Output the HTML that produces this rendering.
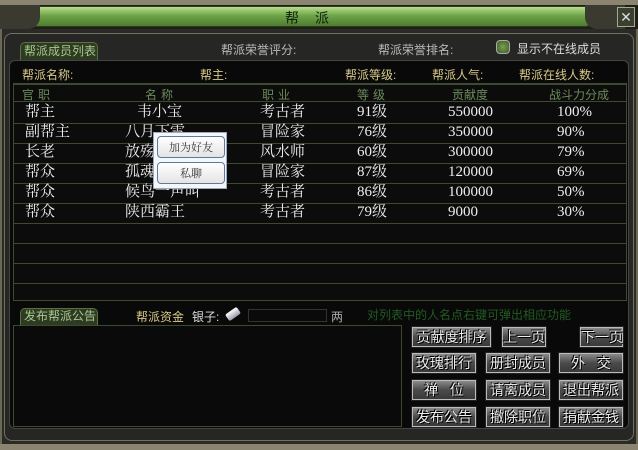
<!DOCTYPE html><html><head><meta charset="utf-8"><style>
*{margin:0;padding:0;box-sizing:border-box}
body{width:638px;height:450px;overflow:hidden;background:#2c2c28;font-family:"Liberation Sans","Noto Sans CJK SC",sans-serif;position:relative}
.a{position:absolute}
.t{font-size:12px;white-space:nowrap}
.y{color:#d8c98a}
.g{color:#6c8a5a}
.w{color:#eee;font-family:"Liberation Serif","Noto Serif CJK SC",serif;font-size:15px}
.btn{position:absolute;height:20px;background:linear-gradient(#8a8a8a,#4a4a4a 50%,#3a3a3a);border:1px solid #bbb;outline:1px solid #222;color:#eee;font-size:14px;text-align:center;line-height:18px;text-shadow:1px 1px 0 #000,-1px -1px 0 #000;white-space:pre}
.line{position:absolute;left:14px;width:612px;height:1px;background:#3c4a30}
</style></head><body>
<div class="a" style="left:0;top:0;width:638px;height:5px;background:#8a8470"></div>
<div class="a" style="left:0;top:5px;width:638px;height:24px;background:#1e2018"></div>
<div class="a" style="left:30px;top:6px;width:560px;height:21px;border-radius:4px;background:linear-gradient(#b8dc8c,#6ea448 45%,#4e7c30);border:1px solid #2a3a1a"></div>
<div class="a" style="left:0;top:5px;width:40px;height:24px;background:#3a3a30;border-radius:0 0 12px 0"></div>
<div class="a" style="left:585px;top:5px;width:40px;height:24px;background:#3a3a30;border-radius:0 0 0 12px"></div>
<div class="a" style="left:617px;top:7px;width:18px;height:20px;border:1px solid #a8a890;background:#3a4030;color:#ddd;font-size:14px;text-align:center;line-height:18px">✕</div>
<div class="a t" style="left:285px;top:8px;font-size:14px;color:#102010;letter-spacing:16px">帮派</div>
<div class="a" style="left:0;top:29px;width:638px;height:421px;border:2px solid #6c6856;border-top:none;background:#2a2a27"></div>
<div class="a" style="left:4px;top:33px;width:630px;height:408px;border:1px solid #707060;border-radius:8px;background:#262624"></div>
<div class="a t" style="left:20px;top:42px;width:78px;height:18px;border:1px solid #5a7040;border-bottom:none;border-radius:5px 5px 0 0;background:#2e3a22;color:#a8c890;line-height:16px;padding-left:3px">帮派成员列表</div>
<div class="a t" style="left:221px;top:41px;color:#bbb">帮派荣誉评分:</div>
<div class="a t" style="left:378px;top:41px;color:#bbb">帮派荣誉排名:</div>
<div class="a" style="left:496px;top:40px;width:14px;height:14px;border-radius:4px;background:radial-gradient(#7aa050,#3e5a28);border:1px solid #aaa"></div>
<div class="a t" style="left:517px;top:40px;color:#ddd">显示不在线成员</div>
<div class="a" style="left:9px;top:60px;width:620px;height:369px;background:#090909;border:1px solid #444;border-radius:6px"></div>
<div class="a t y" style="left:22px;top:66px">帮派名称:</div>
<div class="a t y" style="left:200px;top:66px">帮主:</div>
<div class="a t y" style="left:345px;top:66px">帮派等级:</div>
<div class="a t y" style="left:432px;top:66px">帮派人气:</div>
<div class="a t y" style="left:519px;top:66px">帮派在线人数:</div>
<div class="a" style="left:13px;top:83px;width:614px;height:218px;border:1px solid #3c4a30;background:#0c0c0c"></div>
<div class="line" style="top:84px"></div>
<div class="a t g" style="left:22px;top:86px;letter-spacing:4px">官职</div>
<div class="a t g" style="left:145px;top:86px;letter-spacing:4px">名称</div>
<div class="a t g" style="left:262px;top:86px;letter-spacing:4px">职业</div>
<div class="a t g" style="left:357px;top:86px;letter-spacing:4px">等级</div>
<div class="a t g" style="left:452px;top:86px">贡献度</div>
<div class="a t g" style="left:549px;top:86px">战斗力分成</div>
<div class="line" style="top:101px"></div>
<div class="line" style="top:123px"></div><div class="line" style="top:143px"></div><div class="line" style="top:163px"></div><div class="line" style="top:183px"></div><div class="line" style="top:203px"></div><div class="line" style="top:223px"></div><div class="line" style="top:243px"></div><div class="line" style="top:263px"></div><div class="line" style="top:283px"></div>
<div class="a w" style="left:25px;top:102px;line-height:20px">帮主<br>副帮主<br>长老<br>帮众<br>帮众<br>帮众</div>
<div class="a w" style="left:125px;top:102px;line-height:20px"><span style="margin-left:12px">韦小宝</span><br>八月下雪<br>放殇<br>孤魂<br>候鸟一声叫<br>陕西霸王</div>
<div class="a w" style="left:260px;top:102px;line-height:20px">考古者<br>冒险家<br>风水师<br>冒险家<br>考古者<br>考古者</div>
<div class="a w" style="left:357px;top:102px;line-height:20px">91级<br>76级<br>60级<br>87级<br>86级<br>79级</div>
<div class="a w" style="left:448px;top:102px;line-height:20px">550000<br>350000<br>300000<br>120000<br>100000<br>9000</div>
<div class="a w" style="left:557px;top:102px;line-height:20px">100%<br>90%<br>79%<br>69%<br>50%<br>30%</div>
<div class="a" style="left:153px;top:132px;width:74px;height:57px;background:#f4f6fa;border:1px solid #9ab"></div>
<div class="a" style="left:157px;top:136px;width:68px;height:22px;border:1px solid #5a7aa0;border-radius:4px;background:linear-gradient(#fff,#e4e4e4);font-family:'Noto Serif CJK SC',serif;font-size:11px;text-align:center;line-height:20px;color:#333">加为好友</div>
<div class="a" style="left:157px;top:162px;width:68px;height:22px;border:1px solid #5a7aa0;border-radius:4px;background:linear-gradient(#fff,#e4e4e4);font-family:'Noto Serif CJK SC',serif;font-size:11px;text-align:center;line-height:20px;color:#333">私聊</div>
<div class="a t" style="left:20px;top:308px;width:78px;height:17px;border:1px solid #5a7040;border-bottom:none;border-radius:5px 5px 0 0;background:#2e3a22;color:#a8c890;line-height:15px;padding-left:3px">发布帮派公告</div>
<div class="a t y" style="left:136px;top:308px">帮派资金</div>
<div class="a t" style="left:192px;top:308px;color:#ddd">银子:</div>
<div class="a" style="left:226px;top:310px;width:14px;height:8px;background:linear-gradient(#fff,#99a);transform:rotate(-35deg);border-radius:2px"></div>
<div class="a" style="left:248px;top:309px;width:79px;height:13px;background:#0a0a0a;border:1px solid #333"></div>
<div class="a t" style="left:331px;top:308px;color:#aaa">两</div>
<div class="a t" style="left:367px;top:306px;color:#225a22">对列表中的人名点右键可弹出相应功能</div>
<div class="a" style="left:13px;top:325px;width:389px;height:102px;border:1px solid #3c4a30;background:#0a0a0a"></div>
<div class="btn" style="left:412px;top:327px;width:79px">贡献度排序</div>
<div class="btn" style="left:502px;top:327px;width:44px">上一页</div>
<div class="btn" style="left:580px;top:327px;width:43px">下一页</div>
<div class="btn" style="left:412px;top:353px;width:64px">玫瑰排行</div>
<div class="btn" style="left:486px;top:353px;width:64px">册封成员</div>
<div class="btn" style="left:559px;top:353px;width:64px">外   交</div>
<div class="btn" style="left:412px;top:380px;width:64px">禅   位</div>
<div class="btn" style="left:486px;top:380px;width:64px">请离成员</div>
<div class="btn" style="left:559px;top:380px;width:64px">退出帮派</div>
<div class="btn" style="left:412px;top:407px;width:64px">发布公告</div>
<div class="btn" style="left:486px;top:407px;width:64px">撤除职位</div>
<div class="btn" style="left:559px;top:407px;width:64px">捐献金钱</div>
<div class="a" style="left:0;top:444px;width:638px;height:6px;background:#8a8470"></div>
</body></html>
